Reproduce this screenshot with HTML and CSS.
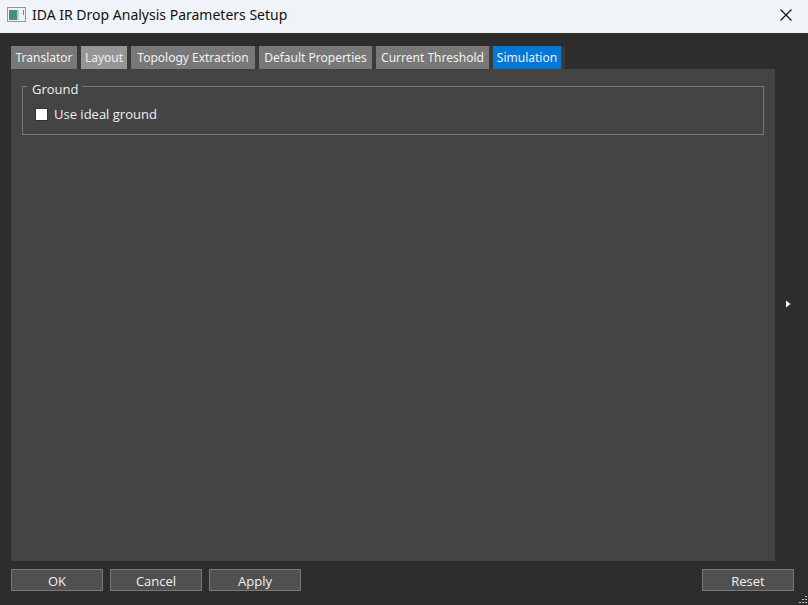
FILE: index.html
```html
<!DOCTYPE html>
<html lang="en">

<head>
    <meta charset="utf-8">
    <title>IDA IR Drop Analysis Parameters Setup</title>
    <link rel="stylesheet" href="styles.css">
</head>

<body>
    <header class="titlebar">
        <svg class="app-icon" width="20" height="16" viewBox="0 0 20 16">
            <rect x="0.5" y="0.5" width="18" height="14" fill="#eef3f5" stroke="#8f999b" />
            <rect x="2" y="3" width="8" height="10" fill="#4b8c85" />
            <rect x="10" y="3" width="2" height="10" fill="#b9cdcc" />
            <path d="M16.5 3v5" stroke="#74838a" />
        </svg>
        <h1>IDA IR Drop Analysis Parameters Setup</h1>
        <button type="button" class="close" aria-label="Close">
            <svg width="14" height="14" viewBox="0 0 14 14">
                <path d="M1.5 1.5l11 11M12.5 1.5l-11 11" stroke="#111" stroke-width="1.2" />
            </svg>
        </button>
    </header>

    <form class="setup">
        <div class="main">
            <div class="pages">
                <div class="tabs" role="tablist">
                    <button type="button" class="tab" role="tab">Translator</button>
                    <button type="button" class="tab hover" role="tab">Layout</button>
                    <button type="button" class="tab" role="tab">Topology Extraction</button>
                    <button type="button" class="tab" role="tab">Default Properties</button>
                    <button type="button" class="tab" role="tab">Current Threshold</button>
                    <button type="button" class="tab active" role="tab" aria-selected="true">Simulation</button>
                </div>
                <div class="panel" role="tabpanel">
                    <fieldset>
                        <legend>Ground</legend>
                        <input type="checkbox" id="ideal-ground" name="ideal-ground">
                        <label for="ideal-ground">Use ideal ground</label>
                    </fieldset>
                </div>
            </div>
            <button type="button" class="expand" aria-label="Expand">
                <svg width="6" height="8" viewBox="0 0 6 8">
                    <path d="M1 0.5L5.5 4L1 7.5z" fill="#fff" />
                </svg>
            </button>
        </div>

        <div class="actions">
            <button type="submit" class="btn">OK</button>
            <button type="button" class="btn">Cancel</button>
            <button type="button" class="btn">Apply</button>
            <button type="reset" class="btn reset">Reset</button>
        </div>
    </form>

    <svg class="grip" width="10" height="10" viewBox="0 0 10 10">
        <path d="M7 1h2v1h-2zM4 4h2v1h-2zM7 4h2v1h-2zM1 7h2v1h-2zM4 7h2v1h-2zM7 7h2v1h-2z" fill="#c4c4c4" />
    </svg>
</body>

</html>
```

FILE: styles.css
```css
* {
    box-sizing: border-box;
}

body {
    display: flex;
    flex-direction: column;
    min-height: 100vh;
    margin: 0;
    background-color: #2d2d2d;
    color: #f0f0f0;
    font-family: "Open Sans", "Noto Sans", sans-serif;
    font-size: 13px;
    line-height: 18px;
}

button {
    margin: 0;
    padding: 0;
    border: none;
    background: none;
    color: inherit;
    font: inherit;
}

svg {
    display: block;
}

.titlebar {
    display: flex;
    align-items: center;
    height: 33px;
    padding: 0 15px 4px 7px;
    background-color: #f0f4f9;
    color: #111;
}

.titlebar h1 {
    flex: 1;
    margin: 0 0 0 5px;
    font-family: "Noto Sans", sans-serif;
    font-size: 14px;
    font-weight: normal;
    line-height: 20px;
}

.setup {
    display: flex;
    flex: 1;
    flex-direction: column;
    padding: 13px 14px 14px 11px;
}

.main {
    display: flex;
    flex: 1;
}

.pages {
    display: flex;
    flex: 1;
    flex-direction: column;
}

.tabs {
    display: grid;
    grid-template-columns: 66px 46px 124px 113px 113px 68px;
    align-self: flex-start;
    gap: 4px;
    padding-right: 4px;
    background-color: #3a3a3a;
}

.tab {
    height: 23px;
    background-color: #787878;
    font-family: "Noto Sans", sans-serif;
    font-size: 12px;
    white-space: nowrap;
}

.tab.hover {
    background-color: #969696;
}

.tab.active {
    background-color: #0078d7;
}

.panel {
    flex: 1;
    padding: 8px 11px;
    background-color: #444;
}

fieldset {
    display: flex;
    align-items: center;
    margin: 0;
    padding: 10px 12px 11px;
    border: 1px solid #787878;
}

/* the caption hangs a little below the frame line */
legend {
    margin-left: -8px;
    padding: 6px 4px 0 5px;
    line-height: 12px;
}

input[type="checkbox"] {
    appearance: none;
    width: 13px;
    height: 13px;
    margin: 0 6px 0 0;
    border: 1px solid #333;
    background-color: #fff;
}

input[type="checkbox"]:checked {
    background-color: #0078d7;
}

.expand {
    width: 19px;
    padding-left: 10px;
}

.actions {
    display: flex;
    gap: 7px;
    padding-top: 8px;
}

.btn {
    width: 92px;
    height: 22px;
    padding-top: 2px;
    border: 1px solid #787878;
    background-color: #505050;
    line-height: 18px;
}

.btn.reset {
    margin-left: auto;
}

.grip {
    position: absolute;
    right: 0;
    bottom: 0;
}
```
